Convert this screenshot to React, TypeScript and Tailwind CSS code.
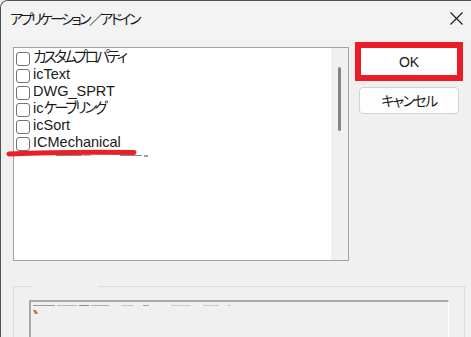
const font = "font-['Liberation_Sans','Noto_Sans_CJK_JP',sans-serif] [font-feature-settings:'palt']"

// Japanese text runs a bit narrower than Noto's kana
function J({ children, t = '-2.7px' }: { children: string; t?: string }) {
  return <span style={{ letterSpacing: t }}>{children}</span>
}

const items = [
  <J>カスタムプロパティ</J>,
  <>icText</>,
  <>DWG_SPRT</>,
  <>ic<J>ケーブリング</J></>,
  <>icSort</>,
  <>ICMechanical</>,
]

function Check() {
  return <span className="w-[14px] h-[14px] shrink-0 rounded-[3px] border border-[#727272] bg-white" />
}

export default function App() {
  return (
    <div className={`relative w-[471px] h-[337px] overflow-hidden bg-[#e9e9e9] text-[#1a1a1a] ${font}`}>
      <div className="w-[480px] h-[340px] flex flex-col rounded-tl-[8px] border-l border-t border-[#505050] bg-[#f0f0f0] overflow-hidden">
        {/* title */}
        <div className="h-[38px] shrink-0 flex items-center justify-between pl-[9px] pr-[17px] bg-[#f3f3f3]">
          <span className="text-[14px] leading-none mt-[-2px]"><J t="-2.6px">アプリケーション／アドイン</J></span>
          <svg width="13" height="13" viewBox="0 0 13 13" className="mt-[-3px]">
            <path d="M0.5 0.5L12.5 12.5M12.5 0.5L0.5 12.5" stroke="#1a1a1a" strokeWidth="1.1" />
          </svg>
        </div>

        {/* body */}
        <div className="flex items-start pt-[3px] pl-[12px]">
          <div className="mt-[5px] w-[336px] h-[214px] border border-[#a3a3a3] bg-white flex">
            <div className="flex-1 pl-[2px] pt-[2px] flex flex-col">
              {items.map((t, i) => (
                <div key={i} className="h-[17px] flex items-center gap-[3px]">
                  <Check />
                  <span className="text-[14.5px] leading-none mt-[-2px]">{t}</span>
                </div>
              ))}
              <div className="h-[17px] flex items-start pt-[3px] pl-[40px] gap-[1px]">
                <span className="w-[26px] h-[1px] bg-[#8a8a8a]" />
                <span className="w-[8px] h-[1px] bg-[#b0b0b0]" />
                <span className="w-[22px] h-[1px] bg-[#8a8a8a] ml-[28px]" />
                <span className="w-[4px] h-[2px] bg-[#a0a0a0] ml-[1px]" />
              </div>
            </div>
            <div className="w-[17px] h-full bg-[#f0f0f0] flex justify-center pt-[19px]">
              <div className="w-[3px] h-[64px] rounded-full bg-[#858585]" />
            </div>
          </div>

          <div className="ml-[6px] flex flex-col items-center gap-[6px]">
            <button className="w-[108px] h-[39px] border-[6px] border-[#ec1c24] bg-white text-[14px] leading-none">
              OK
            </button>
            <button className="w-[100px] h-[27px] rounded-[4px] border border-[#d3d3d3] bg-[#fdfdfd] text-[14px] leading-none">
              <J t="-1.6px">キャンセル</J>
            </button>
          </div>
        </div>

        {/* group box */}
        <fieldset className="mt-[24px] ml-[12px] w-[452px] h-[80px] border border-[#dcdcdc] pl-[15px] pt-[13px]">
          <legend className="ml-[3px] w-[66px] h-[2px]" />
          <div className="w-[420px] h-[60px] border-t-2 border-l-2 border-[#a8a8a8] border-r border-r-white bg-[#f0f0f0] pl-[2px] pt-[3px]">
            <div className="flex items-center gap-[2px]">
              <span className="w-[22px] h-[1px] bg-[#9a9a9a]" />
              <span className="w-[20px] h-[1px] bg-[#b8b8b8]" />
              <span className="w-[10px] h-[1px] bg-[#8a8a8a]" />
              <span className="w-[18px] h-[1px] bg-[#b0b0b0]" />
              <span className="w-[12px] h-[1px] bg-[#c8c8c8] ml-[10px]" />
              <span className="w-[6px] h-[1px] bg-[#a0a0a0] ml-[8px]" />
              <span className="w-[20px] h-[1px] bg-[#cccccc] ml-[20px]" />
              <span className="w-[16px] h-[1px] bg-[#cccccc] ml-[10px]" />
              <span className="w-[4px] h-[1px] bg-[#cccccc] ml-[6px]" />
            </div>
            <span className="block mt-[4px] ml-[1px] w-[3px] h-[4px] bg-[#c27a2a] skew-x-[30deg]" />
          </div>
        </fieldset>
      </div>

      {/* red annotation underline */}
      <svg className="absolute left-[5px] top-[148px]" width="134" height="10" viewBox="0 0 134 10">
        <path d="M4 6 Q60 3.5 129 4.5" stroke="#e8202a" strokeWidth="5" strokeLinecap="round" fill="none" />
      </svg>
    </div>
  )
}
